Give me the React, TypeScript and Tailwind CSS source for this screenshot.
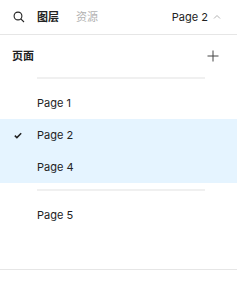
import React from "react";

const font = { fontFamily: 'Inter, "Noto Sans CJK SC", sans-serif' };

function Row({ label, checked, selected }: { label: string; checked?: boolean; selected?: boolean }) {
  return (
    <div className={`flex h-[32px] items-center pt-[1px] ${selected ? "bg-[#e5f4ff]" : ""}`}>
      <div className="flex w-[37px] items-center justify-center">
        {checked && (
          <svg width="8" height="7" viewBox="0 0 8 7" className="ml-[-1px]">
            <path d="M0.8 3.6 L2.9 5.6 L7.2 1.2" fill="none" stroke="#222" strokeWidth="1.5" />
          </svg>
        )}
      </div>
      <span className="text-[11px] text-[#222]">{label}</span>
    </div>
  );
}

export default function App() {
  return (
    <div className="h-[285px] w-[237px] bg-white" style={font}>
      <div className="flex h-[35px] items-center border-b border-[#e6e6e6] pl-[13px] pr-[16px]">
        <svg width="12" height="12" viewBox="0 0 12 12">
          <circle cx="5" cy="5" r="3.9" fill="none" stroke="#222" strokeWidth="1.1" />
          <path d="M7.8 7.8 L11 11" stroke="#222" strokeWidth="1.1" />
        </svg>
        <span className="ml-[12px] text-[11px] font-bold text-[#222]">图层</span>
        <span className="ml-[17px] text-[11px] text-[#b3b3b3]">资源</span>
        <span className="ml-auto text-[11px] text-[#222]">Page 2</span>
        <svg width="8" height="6" viewBox="0 0 8 6" className="ml-[5px]">
          <path d="M1 4.5 L4 1.5 L7 4.5" fill="none" stroke="#b3b3b3" strokeWidth="1" />
        </svg>
      </div>
      <div className="h-[235px] border-b border-[#e6e6e6]">
        <div className="flex h-[42px] items-center pl-[12px] pr-[18px]">
          <span className="text-[11px] font-bold text-[#222]">页面</span>
          <svg width="12" height="12" viewBox="0 0 12 12" className="ml-auto">
            <path d="M6 0.5 V11.5 M0.5 6 H11.5" stroke="#444" strokeWidth="1" />
          </svg>
        </div>
        <div className="ml-[37px] mr-[32px] h-[2px] bg-[#f0f0f0]" />
        <div className="h-[8px]" />
        <Row label="Page 1" />
        <Row label="Page 2" checked selected />
        <Row label="Page 4" selected />
        <div className="h-[6px]" />
        <div className="ml-[37px] mr-[32px] h-[2px] bg-[#f0f0f0]" />
        <div className="h-[8px]" />
        <Row label="Page 5" />
      </div>
    </div>
  );
}
